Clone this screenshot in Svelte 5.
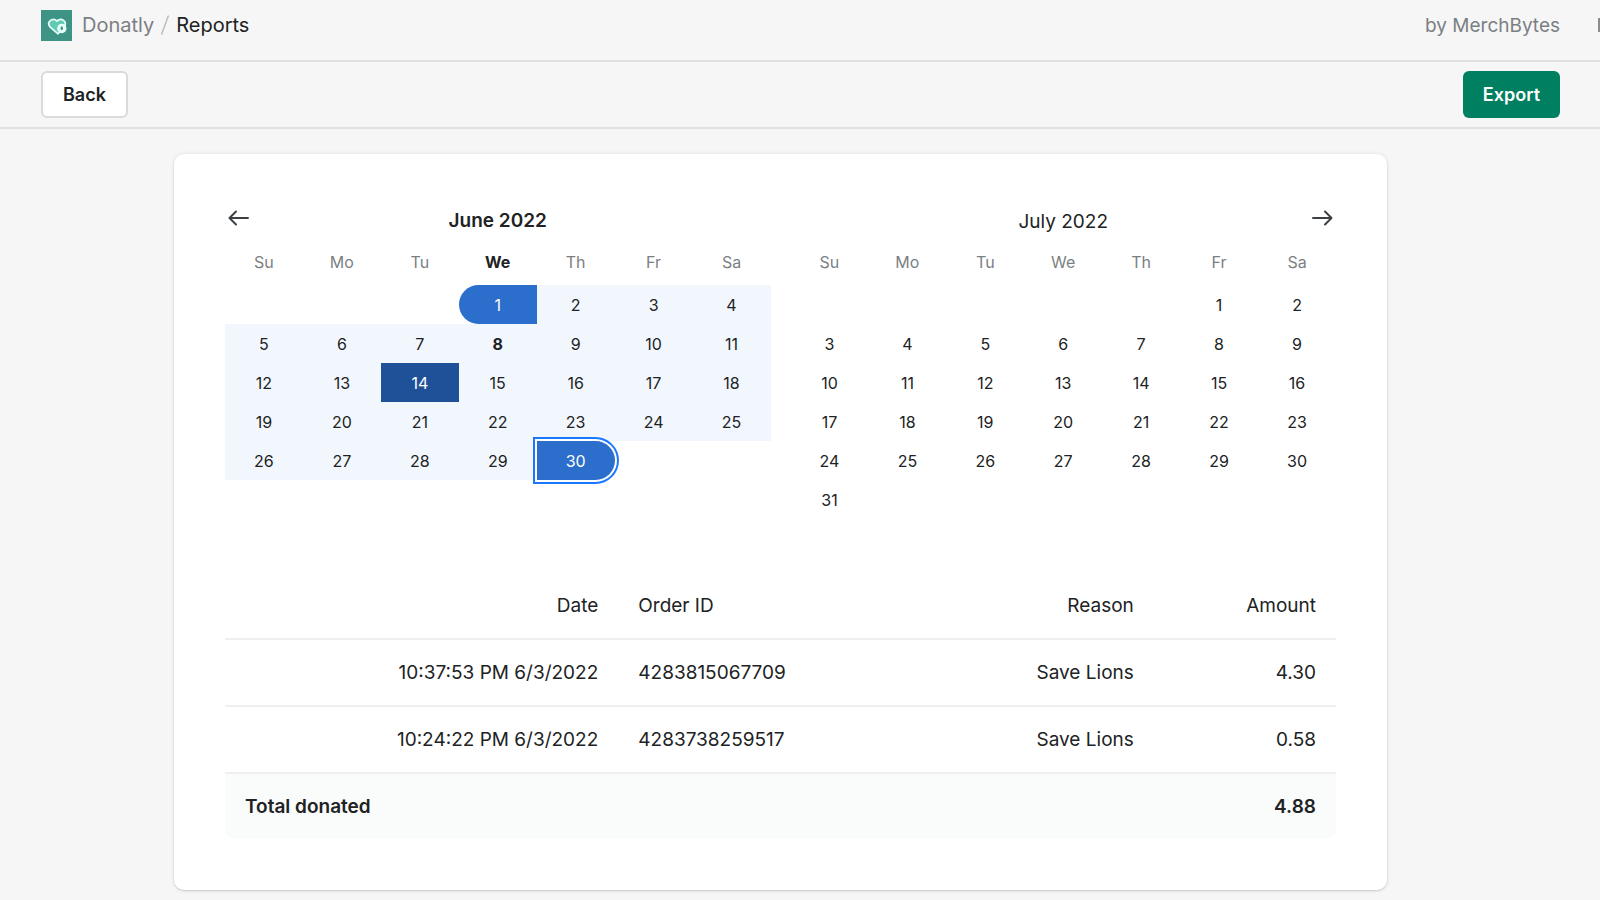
<script lang="ts">
    type Month = {
        name: string;
        short: string;
        offset: number;
        days: number;
        current: boolean;
    };

    const weekdays = ["Su", "Mo", "Tu", "We", "Th", "Fr", "Sa"];

    const months: Month[] = [
        { name: "June 2022", short: "June", offset: 3, days: 30, current: true },
        { name: "July 2022", short: "July", offset: 5, days: 31, current: false },
    ];

    const orders = [
        { date: "10:37:53 PM 6/3/2022", id: "4283815067709", reason: "Save Lions", amount: 4.3 },
        { date: "10:24:22 PM 6/3/2022", id: "4283738259517", reason: "Save Lions", amount: 0.58 },
    ];

    const today = 8;
    const hovered = 14;

    let start = $state(1);
    let end = $state(30);

    let total = $derived(orders.reduce((sum, order) => sum + order.amount, 0));

    function getWeeks(month: Month) {
        const weeks: (number | null)[][] = [];
        const count = Math.ceil((month.offset + month.days) / 7);
        for (let w = 0; w < count; w++) {
            weeks.push(
                weekdays.map((_, d) => {
                    const day = w * 7 + d - month.offset + 1;
                    return day > 0 && day <= month.days ? day : null;
                }),
            );
        }
        return weeks;
    }

    function select(month: Month, day: number) {
        if (!month.current) return;
        if (day < start) start = day;
        else end = day;
    }
</script>

<header class="title-bar">
    <svg class="logo" viewBox="0 0 31 31" aria-hidden="true">
        <rect width="31" height="31" fill="#3d9484" />
        <path
            d="M17 23.8 9.200 17.2c-4.200-4.800 2-10.400 6.800-6.200 4.600-4.200 10.400.8 7.400 5.600z"
            fill="#62c9b2"
            stroke="#e6fffa"
            stroke-width="1.7"
            stroke-linejoin="round"
        />
        <circle cx="20.8" cy="18.5" r="4.7" fill="#e6fffa" />
        <ellipse cx="20.8" cy="18.3" rx="1.2" ry="2" fill="#3d9484" />
    </svg>
    <nav aria-label="Breadcrumb">
        <a href="#donatly">Donatly</a>
        <svg class="slash" viewBox="0 0 10 22" aria-hidden="true">
            <path d="M8.500 1.500 1.500 20.500" stroke="#babec3" stroke-width="1.5" />
        </svg>
        <span class="page">Reports</span>
    </nav>
    <span class="author">by MerchBytes</span>
    <span class="edge"></span>
</header>

<div class="actions">
    <button class="btn">Back</button>
    <button class="btn primary">Export</button>
</div>

<main>
    <div class="card">
        <div class="calendar">
            {#each months as month}
                <section>
                    <div class="month-head">
                        {#if month.current}
                            <button class="arrow prev" aria-label="Previous month">
                                <svg viewBox="0 0 22 18" aria-hidden="true">
                                    <path d="M21 9H3M9 2.500 2.500 9 9 15.500" />
                                </svg>
                            </button>
                        {/if}
                        <h2 class:current={month.current}>{month.name}</h2>
                        {#if !month.current}
                            <button class="arrow next" aria-label="Next month">
                                <svg viewBox="0 0 22 18" aria-hidden="true">
                                    <path d="M1 9h18M13 2.500 19.500 9 13 15.500" />
                                </svg>
                            </button>
                        {/if}
                    </div>
                    <table class="month" aria-label={month.name}>
                        <thead>
                            <tr>
                                {#each weekdays as weekday, i}
                                    <th scope="col" class:current={month.current && i === 3}>{weekday}</th>
                                {/each}
                            </tr>
                        </thead>
                        <tbody>
                            {#each getWeeks(month) as week}
                                <tr>
                                    {#each week as day}
                                        <td>
                                            {#if day}
                                                <button
                                                    class="day"
                                                    class:in-range={month.current && day >= start && day <= end}
                                                    class:today={month.current && day === today}
                                                    class:hovered={month.current && day === hovered}
                                                    class:start={month.current && day === start}
                                                    class:end={month.current && day === end}
                                                    aria-label="{month.short} {day}"
                                                    onclick={() => select(month, day)}>{day}</button
                                                >
                                            {/if}
                                        </td>
                                    {/each}
                                </tr>
                            {/each}
                        </tbody>
                    </table>
                </section>
            {/each}
        </div>

        <table class="orders">
            <colgroup>
                <col class="col-date" />
                <col />
                <col class="col-reason" />
                <col class="col-amount" />
            </colgroup>
            <thead>
                <tr>
                    <th scope="col">Date</th>
                    <th scope="col" class="left">Order ID</th>
                    <th scope="col">Reason</th>
                    <th scope="col">Amount</th>
                </tr>
            </thead>
            <tbody>
                {#each orders as order}
                    <tr>
                        <td>{order.date}</td>
                        <td class="left">{order.id}</td>
                        <td>{order.reason}</td>
                        <td>{order.amount.toFixed(2)}</td>
                    </tr>
                {/each}
            </tbody>
            <tfoot>
                <tr>
                    <th scope="row" class="left" colspan="3">Total donated</th>
                    <td>{total.toFixed(2)}</td>
                </tr>
            </tfoot>
        </table>
    </div>
</main>

<style>
    :global(body) {
        background: #f6f6f6;
        color: #202223;
        font-family: Inter, Roboto, sans-serif;
        font-size: 19px;
        line-height: 24px;
    }

    button {
        font: inherit;
        color: inherit;
        cursor: pointer;
    }

    .title-bar,
    .actions {
        display: flex;
        align-items: center;
        box-sizing: border-box;
        padding: 0 40px 0 41px;
        border-bottom: 2px solid #e0e1e2;
    }
    .title-bar {
        height: 62px;
        padding-right: 0;
        padding-bottom: 10px;
        font-size: 20px;
    }
    .actions {
        height: 67px;
        justify-content: space-between;
    }

    .logo {
        width: 31px;
        height: 31px;
        margin-right: 10px;
    }
    nav {
        display: flex;
        align-items: center;
    }
    nav a {
        color: #7b7f83;
        text-decoration: none;
    }
    .slash {
        width: 10px;
        height: 22px;
        margin: 0 6px;
        fill: none;
    }
    .author {
        margin-left: auto;
        padding-top: 2px;
        font-size: 19px;
        color: #7b7f83;
    }
    /* start of the next item, cut off by the window */
    .edge {
        width: 2px;
        height: 14px;
        margin-left: 38px;
        background: #8a8d90;
    }

    .btn {
        height: 47px;
        padding: 0 20px;
        border: 2px solid #d8dadc;
        border-radius: 6px;
        background: white;
        font-size: 18px;
        font-weight: 600;
    }
    .btn.primary {
        border: none;
        background: #008060;
        color: white;
    }

    main {
        padding: 25px 213px 9px 174px;
    }
    .card {
        padding: 51px;
        border-radius: 10px;
        background: white;
        box-shadow:
            0 0 5px rgba(23, 24, 24, 0.08),
            0 1px 2px rgba(0, 0, 0, 0.15);
    }

    .calendar {
        display: grid;
        grid-template-columns: 1fr 1fr;
        gap: 20px;
    }
    .month-head {
        display: grid;
        grid-template-columns: 28px 1fr 28px;
        height: 35px;
    }
    h2 {
        grid-column: 2;
        grid-row: 1;
        margin: 0;
        font-size: 19px;
        font-weight: 400;
        line-height: 34px;
        text-align: center;
    }
    h2.current {
        font-weight: 600;
        line-height: 32px;
    }
    .arrow {
        display: flex;
        align-items: center;
        height: 26px;
        padding: 0 2px;
        border: none;
        background: none;
    }
    .next {
        grid-column: 3;
        justify-content: flex-end;
    }
    .arrow svg {
        width: 22px;
        height: 18px;
        fill: none;
        stroke: #3d4043;
        stroke-width: 2;
        stroke-linecap: round;
        stroke-linejoin: round;
    }

    table {
        width: 100%;
        border-collapse: collapse;
        table-layout: fixed;
    }
    th,
    td {
        padding: 0;
        font-weight: 400;
    }

    .month {
        font-size: 16px;
    }
    .month th {
        height: 43px;
        padding-bottom: 2px;
        color: #7b7f83;
    }
    .month th.current {
        color: #202223;
        font-weight: 700;
    }
    .month td {
        height: 39px;
    }
    .day {
        display: block;
        width: 100%;
        height: 39px;
        padding: 0;
        border: none;
        background: none;
    }
    .in-range {
        background: #f2f7fe;
    }
    .today {
        font-weight: 700;
    }
    .hovered {
        background: #1f5199;
        color: white;
    }
    .start,
    .end {
        background: #2c6ecb;
        color: white;
    }
    .start {
        border-radius: 20px 0 0 20px;
    }
    .end {
        position: relative;
        border-radius: 0 20px 20px 0;
        box-shadow:
            0 0 0 2px white,
            0 0 0 4px #1a78ff;
    }

    .orders {
        margin-top: 54px;
        border-collapse: separate;
        border-spacing: 0;
    }
    .col-date {
        width: 35.4%;
    }
    .col-reason {
        width: 20%;
    }
    .col-amount {
        width: 16.4%;
    }
    .orders th,
    .orders td {
        height: 65px;
        padding: 0 20px;
        border-bottom: 2px solid #eeefef;
        text-align: right;
    }
    .orders .left {
        text-align: left;
    }
    .orders tfoot th,
    .orders tfoot td {
        border: none;
        background: #fafbfb;
        font-weight: 600;
    }
    .orders tfoot th {
        border-radius: 0 0 0 10px;
    }
    .orders tfoot td {
        border-radius: 0 0 10px 0;
    }
</style>
